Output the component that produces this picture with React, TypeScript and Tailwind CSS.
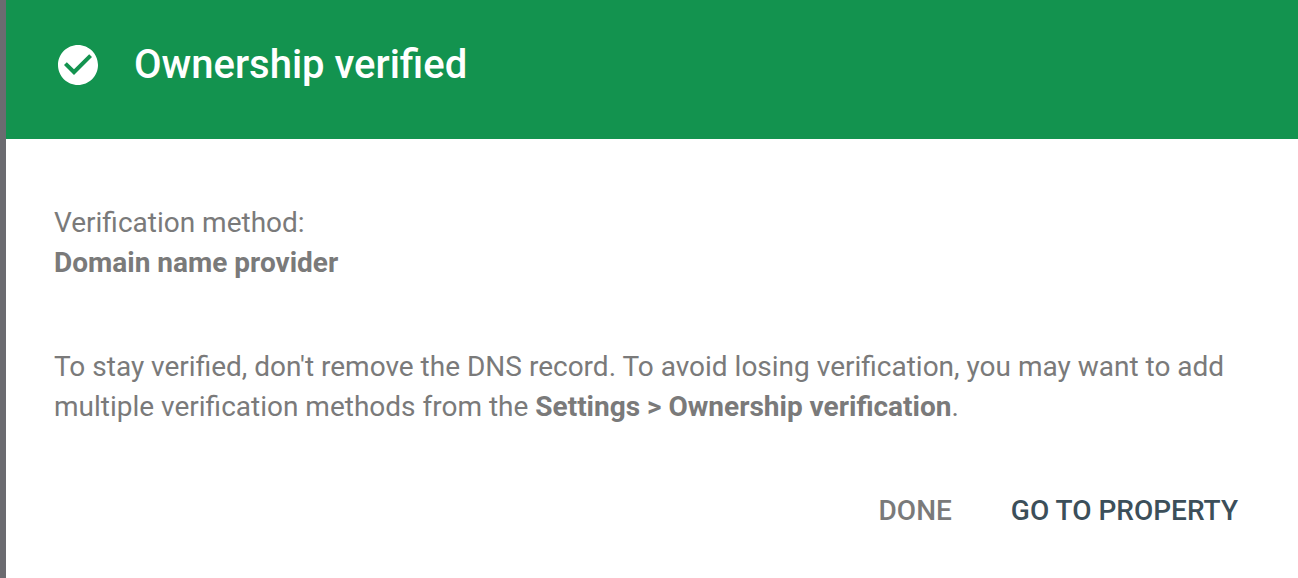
export default function App() {
  return (
    <div className="flex h-[578px] w-[1298px] overflow-hidden bg-white font-['Roboto',sans-serif]">
      <div className="w-[6px] shrink-0 bg-[#6b6b70]" />
      <div className="flex min-w-0 flex-1 flex-col">
        <header className="flex h-[139px] items-center bg-[#13934f] pb-[9px] pl-[48px] text-white">
          <svg className="h-[48px] w-[48px]" viewBox="0 0 24 24" fill="currentColor">
            <path d="M12 2C6.48 2 2 6.48 2 12s4.48 10 10 10 10-4.48 10-10S17.52 2 12 2zm-2 15l-5-5 1.41-1.41L10 14.17l7.59-7.59L19 8l-9 9z" />
          </svg>
          <h1 className="ml-[32px] text-[40px] font-medium leading-none">Ownership verified</h1>
        </header>
        <div className="px-[48px] pt-[64px] text-[28px] leading-[40px] text-[#7a7a7a]">
          <p>Verification method:</p>
          <p className="font-bold">Domain name provider</p>
          <p className="mt-[64px]">
            To stay verified, don't remove the DNS record. To avoid losing verification, you may want to add multiple verification methods from the <b>Settings &gt; Ownership verification</b>.
          </p>
        </div>
        <div className="mt-[64px] flex justify-end gap-[59px] pr-[60px] text-[28px] font-medium leading-[40px]">
          <span className="text-[#7a7a7a]">DONE</span>
          <span className="text-[#3c4f5a]">GO TO PROPERTY</span>
        </div>
      </div>
    </div>
  );
}
